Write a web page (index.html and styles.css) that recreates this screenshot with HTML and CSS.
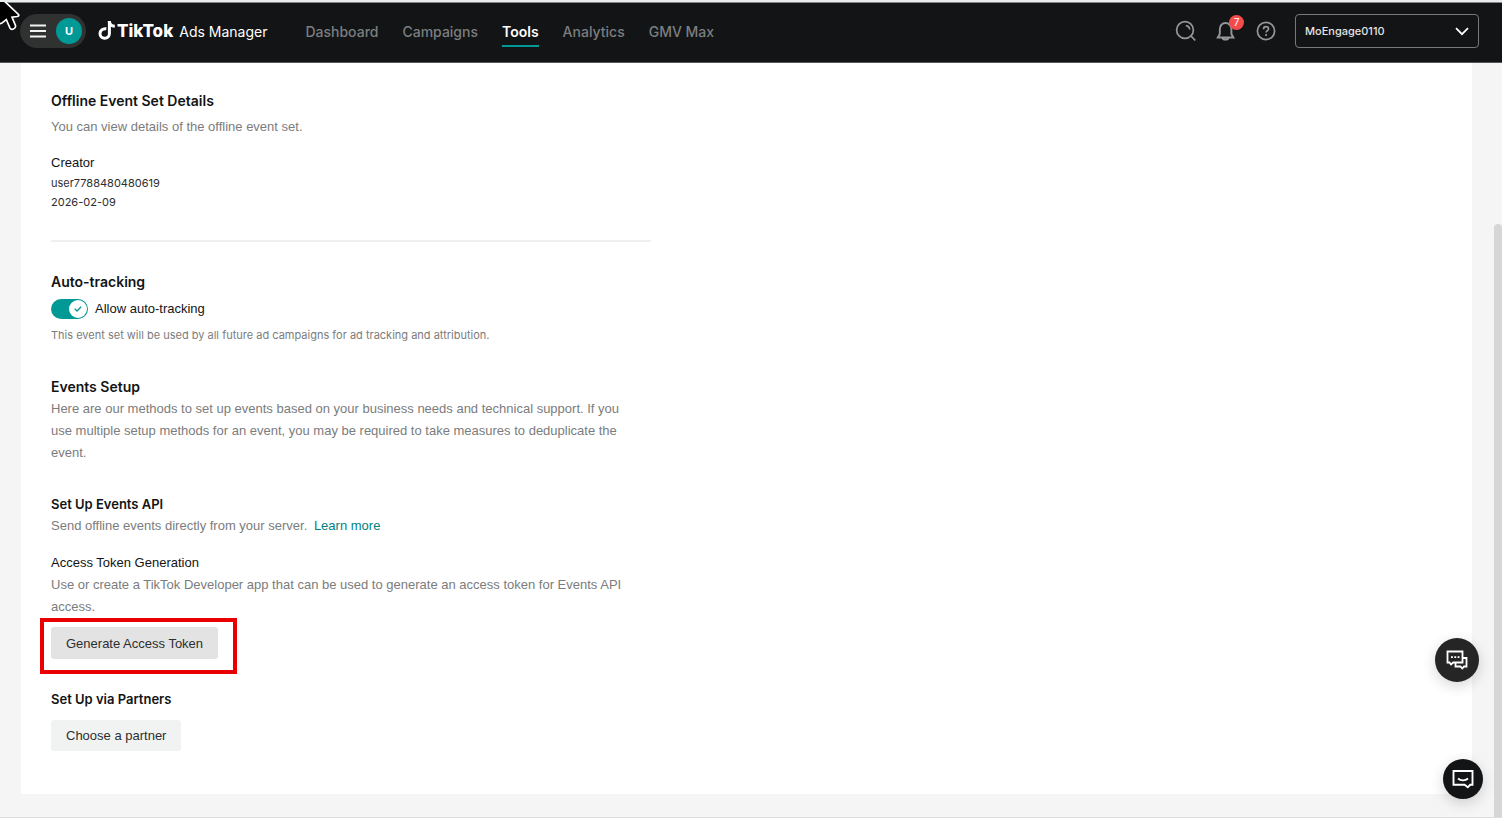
FILE: index.html
```
<!DOCTYPE html>
<html lang="en">
  <head>
    <meta charset="UTF-8" />
    <meta name="viewport" content="width=device-width, initial-scale=1.0" />
    <title>TikTok Ads Manager</title>
    <link rel="stylesheet" href="styles.css">
  </head>
  <body>
    <div class="window">
      <header class="topbar">
        <div class="account">
          <button class="menu-btn" type="button" aria-label="Menu">
            <svg width="18" height="14" viewBox="0 0 18 14" stroke="#f2f2f2" stroke-width="1.8">
              <path d="M1 1.500h16M1 7h16M1 12.500h16" />
            </svg>
          </button>
          <span class="avatar">U</span>
        </div>

        <a class="brand" href="#">
          <svg width="18" height="20" viewBox="0 0 18 20" fill="none" stroke="#fff" stroke-width="3">
            <path d="M8.300 7.800C4.600 7.200 2 9.800 2 12.600c0 2.700 2 4.700 4.700 4.700S11.400 15.300 11.400 12.600V0" />
            <path d="M11.200 0c.3 3.400 2.200 5.100 5.600 5.300" />
          </svg>
          <span class="brand-name">TikTok</span>
          <span class="brand-product">Ads Manager</span>
        </a>

        <nav class="nav">
          <a href="#">Dashboard</a>
          <a href="#">Campaigns</a>
          <a href="#" class="active">Tools</a>
          <a href="#">Analytics</a>
          <a href="#">GMV Max</a>
        </nav>

        <div class="tools">
          <button class="icon-btn" type="button" aria-label="Search">
            <svg width="22" height="22" viewBox="0 0 22 22" fill="none" stroke="#96979a" stroke-width="1.700">
              <circle cx="10" cy="10" r="8.400" />
              <path d="M16 16l4.300 4.500M10.800 5.600c2.200.2 3.600 1.600 3.900 3.900" />
            </svg>
          </button>
          <button class="icon-btn" type="button" aria-label="Notifications">
            <svg width="22" height="22" viewBox="0 0 22 22" fill="none" stroke="#96979a" stroke-width="1.900">
              <path d="M4.800 14.500V9.500C4.800 5.500 7.200 3 10.500 3s5.900 2.500 5.900 6.500v5M4.800 14l-2 3.500h15.600l-2-3.500M7.500 18c.5 2.200 5.500 2.200 6 0" />
            </svg>
            <span class="badge">7</span>
          </button>
          <button class="icon-btn" type="button" aria-label="Help">
            <svg width="22" height="22" viewBox="0 0 22 22" fill="none" stroke="#96979a" stroke-width="1.700">
              <circle cx="11" cy="11" r="8.600" />
              <path d="M8.500 9.200c0-1.600 1-2.500 2.500-2.500s2.500.9 2.500 2.200c0 1.600-2.400 1.800-2.400 3.700M11.100 14v1.900" />
            </svg>
          </button>
        </div>

        <div class="advertiser">
          <select aria-label="Advertiser account">
            <option>MoEngage0110</option>
          </select>
          <svg width="14" height="9" viewBox="0 0 14 9" fill="none" stroke="#fff" stroke-width="1.700">
            <path d="M1 1.200l6 6 6-6" />
          </svg>
        </div>
      </header>

      <main class="page">
        <div class="card">
          <section class="details">
            <h2>Offline Event Set Details</h2>
            <p class="intro">You can view details of the offline event set.</p>
            <h4>Creator</h4>
            <p class="meta">user7788480480619</p>
            <p class="meta">2026-02-09</p>
          </section>

          <section class="tracking">
            <h2>Auto-tracking</h2>
            <label class="switch">
              <input type="checkbox" checked />
              <span class="track">
                <span class="knob">
                  <svg width="8" height="6" viewBox="0 0 8 6" fill="none" stroke="#009995" stroke-width="1.300">
                    <path d="M.8 2.800l2.200 2.200L7.200.8" />
                  </svg>
                </span>
              </span>
              Allow auto-tracking
            </label>
            <p class="note">This event set will be used by all future ad campaigns for ad tracking and attribution.</p>
          </section>

          <section class="setup">
            <h2>Events Setup</h2>
            <p>Here are our methods to set up events based on your business needs and technical support. If you use multiple setup methods for an event, you may be required to take measures to deduplicate the event.</p>
          </section>

          <section class="api">
            <h3>Set Up Events API</h3>
            <p>Send offline events directly from your server. <a class="learn" href="#">Learn more</a></p>
            <h4>Access Token Generation</h4>
            <p>Use or create a TikTok Developer app that can be used to generate an access token for Events API access.</p>
            <div class="highlight">
              <button class="btn pressed" type="button">Generate Access Token</button>
            </div>
          </section>

          <section class="partners">
            <h3>Set Up via Partners</h3>
            <button class="btn" type="button">Choose a partner</button>
          </section>
        </div>
      </main>

      <div class="scroll-thumb"></div>

      <button class="float feedback" type="button" aria-label="Feedback">
        <svg width="22" height="20" viewBox="0 0 22 20" fill="none" stroke="#fff" stroke-width="1.800">
          <path d="M1.500 1.500h15v11H7.200l-2.200 2-1.500-2h-2z" />
          <path d="M16.500 8h4v8.500H18l-1.700 2-1.900-2H9.500V13" />
          <path d="M5 7.200h8.500" stroke-dasharray="1.900 1.400" />
        </svg>
      </button>
      <button class="float chat" type="button" aria-label="Chat">
        <svg width="22" height="20" viewBox="0 0 22 20" fill="none" stroke="#fff" stroke-width="1.900">
          <path d="M1.500 2h19v13.800h-2.300l-2.400 2.500-3.200-2.500H1.500z" />
          <path d="M6 9.500c2.700 2.500 7.300 2.500 10 0" />
        </svg>
      </button>

      <svg class="pointer" width="21" height="32" viewBox="0 0 21 32" fill="#000" stroke="#fff" stroke-width="1.700">
        <path d="M-1 -4L18.500 14.500Q19.500 16 17 16.500L12 17.200 15.500 25.500Q16 28 13.500 29T10 28.200L6.300 19.500 1.500 23.300Q0 24-1 22.500z" />
      </svg>
    </div>
  </body>
</html>
```

FILE: styles.css
```
* {
  box-sizing: border-box;
}

body {
  margin: 0;
  background: #fff;
  color: #121415;
  font-family: "Liberation Sans", Arial, sans-serif;
  font-size: 13px;
  line-height: 22px;
}

h2,
h3,
h4,
p {
  margin: 0;
}

a {
  text-decoration: none;
}

button,
select {
  font-family: inherit;
  cursor: pointer;
}

svg {
  display: block;
  flex: none;
}

.window {
  position: relative;
  display: flex;
  flex-direction: column;
  min-height: calc(100vh - 9px);
  border-top: 2px solid #e9eced;
  border-bottom: 1px solid #dcdcdc;
  overflow: hidden;
}

/* top bar */
.topbar {
  display: flex;
  align-items: center;
  height: 61px;
  padding: 0 23px 3px 20px;
  background: #121415;
  border-top: 1px solid #858787;
  border-bottom: 1px solid #55575a;
  font-family: Inter, "Liberation Sans", sans-serif;
}

.account {
  display: flex;
  align-items: center;
  gap: 9px;
  width: 66px;
  height: 34px;
  padding-left: 9px;
  border-radius: 17px;
  background: #303231;
}

.menu-btn,
.icon-btn {
  position: relative;
  padding: 0;
  border: 0;
  background: none;
}

.avatar {
  width: 26px;
  height: 26px;
  border-radius: 50%;
  background: #009995;
  color: #fff;
  font-size: 11px;
  font-weight: 700;
  line-height: 26px;
  text-align: center;
}

.brand {
  display: flex;
  align-items: center;
  margin-left: 12px;
  color: #fff;
}

.brand-name {
  margin-left: 1px;
  font-size: 17px;
  font-weight: 800;
}

.brand-product {
  margin-left: 6px;
  padding-top: 2px;
  font-size: 14px;
}

.nav {
  display: flex;
  gap: 24px;
  margin-left: 38px;
}

.nav a {
  padding-top: 3px;
  border-bottom: 2px solid transparent;
  color: #7c7e80;
  font-size: 14px;
  font-weight: 500;
  line-height: 26px;
}

.nav a.active {
  border-color: #009995;
  color: #fff;
  font-weight: 600;
}

.tools {
  display: flex;
  gap: 18px;
  margin-left: auto;
}

.badge {
  position: absolute;
  top: -5px;
  right: -7px;
  width: 15px;
  height: 15px;
  border-radius: 8px;
  background: #f54b4b;
  color: #fff;
  font-size: 10px;
  line-height: 15px;
  text-align: center;
}

.advertiser {
  display: grid;
  align-items: center;
  width: 184px;
  margin-left: 18px;
}

.advertiser select,
.advertiser svg {
  grid-area: 1 / 1;
}

.advertiser select {
  appearance: none;
  height: 34px;
  padding: 0 32px 0 9px;
  border: 1px solid #76787a;
  border-radius: 4px;
  background: transparent;
  color: #e4e4e4;
  font-size: 11px;
  font-weight: 500;
}

.advertiser svg {
  justify-self: end;
  margin-right: 10px;
  pointer-events: none;
}

/* content */
.page {
  flex: 1;
  padding: 0 30px 23px 21px;
  background: #f5f5f5;
}

.card {
  padding: 27px 30px 43px;
  background: #fff;
}

.card section {
  max-width: 600px;
}

h2,
h3 {
  font-family: Inter, "Liberation Sans", sans-serif;
  font-weight: 600;
}

h2 {
  font-size: 14px;
}

h3 {
  font-size: 13px;
}

h4 {
  font-size: 13px;
  font-weight: 400;
}

.card p {
  max-width: 590px;
  color: #7b7c7d;
}

.details {
  padding-bottom: 28px;
  border-bottom: 2px solid #f0f0f0;
}

.details .intro {
  margin: 4px 0 14px;
}

.card .meta {
  color: #2c2e2f;
  font-family: Inter, "Liberation Sans", sans-serif;
  font-size: 11px;
  line-height: 19px;
}

.tracking {
  padding-top: 29px;
}

.switch {
  display: flex;
  align-items: center;
  gap: 7px;
  margin: 5px 0;
}

.switch input {
  position: absolute;
  opacity: 0;
}

.track {
  display: flex;
  justify-content: flex-end;
  width: 37px;
  height: 20px;
  padding: 1px;
  border-radius: 10px;
  background: #009995;
}

.knob {
  display: grid;
  place-items: center;
  width: 18px;
  height: 18px;
  border-radius: 50%;
  background: #fff;
}

.card .note {
  font-family: Inter, "Liberation Sans", sans-serif;
  font-size: 11px;
  line-height: 20px;
}

.setup {
  padding-top: 31px;
}

.api {
  padding-top: 29px;
}

.learn {
  margin-left: 3px;
  color: #00827f;
}

.api h4 {
  margin-top: 15px;
}

/* red frame around the button to click */
.highlight {
  width: fit-content;
  margin-left: -11px;
  padding: 5px 15px 11px 7px;
  border: 4px solid #ea0000;
}

.btn {
  display: block;
  height: 31px;
  padding: 0 15px;
  border: 0;
  border-radius: 3px;
  background: #f1f3f3;
  color: #2c2e2f;
  font-size: 13px;
}

.btn.pressed {
  height: 32px;
  background: #e3e3e3;
}

.partners {
  padding-top: 14px;
}

.partners h3 {
  margin-bottom: 10px;
}

/* overlays */
.scroll-thumb {
  position: absolute;
  top: 222px;
  right: 0;
  bottom: 0;
  width: 8px;
  border-radius: 4px 4px 0 0;
  background: #d6d6d6;
}

.float {
  position: absolute;
  display: grid;
  place-items: center;
  padding: 0;
  border: 0;
  border-radius: 50%;
  box-shadow: 0 4px 14px rgba(0, 0, 0, 0.16);
}

.feedback {
  right: 23px;
  bottom: 135px;
  width: 44px;
  height: 44px;
  background: #252525;
}

.chat {
  right: 19px;
  bottom: 18px;
  width: 40px;
  height: 40px;
  background: #121415;
}

.pointer {
  position: absolute;
  top: -2px;
  left: 0;
}
```
